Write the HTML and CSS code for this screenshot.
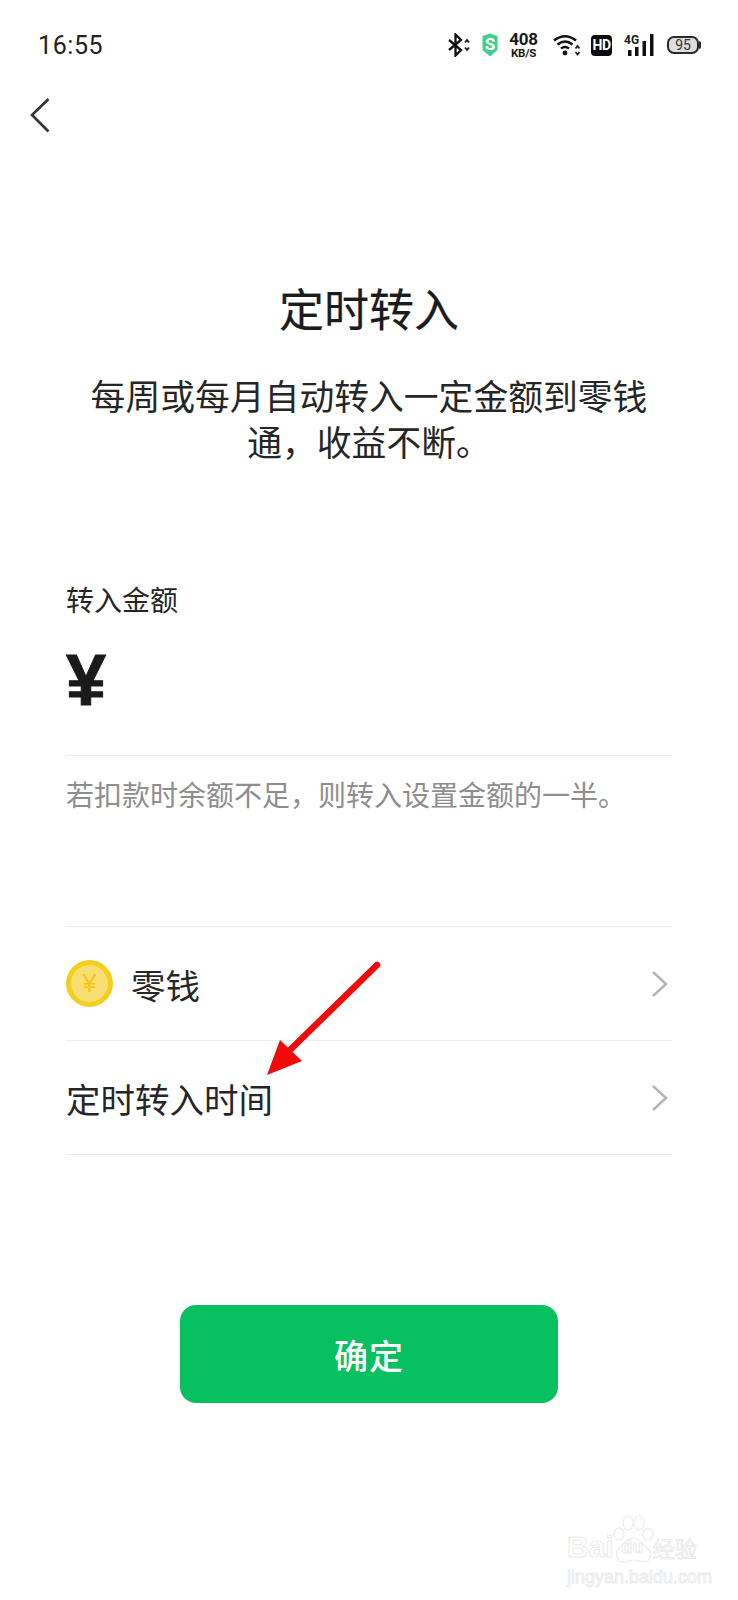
FILE: index.html
```html
<!DOCTYPE html>
<html lang="zh">
<head>
<meta charset="utf-8">
<title>定时转入</title>
<link rel="stylesheet" href="styles.css">
</head>
<body>
<div class="page">
  <header class="status">
    <span class="time">16:55</span>
    <div class="status-icons">
      <svg class="ic-bt" width="24" height="24" viewBox="0 0 24 24"><path d="M1 7 L13 17 L7.500 22.500 V1.500 L13 7 L1 17" fill="none" stroke="#111" stroke-width="2.300"/><path d="M17 9.500 L19 7 L21 9.500 M17 14.500 L19 17 L21 14.500" fill="none" stroke="#222" stroke-width="2"/></svg>
      <svg class="ic-shield" width="16" height="24" viewBox="0 0 16 24"><path d="M0.500 3 L8 0.500 L15.500 3 V17 L8 23.500 L0.500 17Z" fill="#3FCF8E"/><text x="8" y="17" class="shield-s">S</text></svg>
      <div class="speed"><span class="speed-num">408</span><span class="speed-unit">KB/S</span></div>
      <svg class="ic-wifi" width="28" height="24" viewBox="0 0 28 24"><path d="M1 7.500 Q12 -1 23 7.500 M4.500 11.500 Q12 5.500 19.500 11.500 M8 15.500 Q12 12.500 16 15.500" fill="none" stroke="#111" stroke-width="2.600"/><circle cx="12" cy="20" r="2.400" fill="#111"/><path d="M22.500 15.500 L24.500 13 L26.500 15.500 M22.500 19 L24.500 21.500 L26.500 19" fill="none" stroke="#222" stroke-width="1.800"/></svg>
      <div class="hd">HD</div>
      <svg class="ic-signal" width="30" height="24" viewBox="0 0 30 24"><text x="0" y="11" class="sig-4g">4G</text><rect x="4" y="17" width="3.500" height="6" fill="#111"/><rect x="11" y="14" width="3.500" height="9" fill="#111"/><rect x="18.500" y="8" width="3.500" height="15" fill="#111"/><rect x="26" y="1" width="3.500" height="22" fill="#111"/></svg>
      <div class="battery"><span class="batt-body">95</span><span class="batt-tip"></span></div>
    </div>
  </header>

  <nav class="nav">
    <svg width="24" height="36" viewBox="0 0 24 36"><path d="M19.500 2 L3 18 L19.500 34.500" fill="none" stroke="#333" stroke-width="2.600"/></svg>
  </nav>

  <section class="intro">
    <h1 class="title">定时转入</h1>
    <p class="desc">每周或每月自动转入一定金额到零钱通，收益不断。</p>
  </section>

  <section class="amount">
    <div class="amount-label">转入金额</div>
    <div class="amount-input">¥</div>
    <p class="hint">若扣款时余额不足，则转入设置金额的一半。</p>
  </section>

  <section class="rows">
    <div class="row">
      <div class="row-left">
        <svg class="coin" width="47" height="47" viewBox="0 0 47 47"><circle cx="23.500" cy="23.500" r="23.500" fill="#F5CF1F"/><circle cx="23.500" cy="23.500" r="18.500" fill="#F9DF73"/><text x="23.500" y="32" class="coin-y">¥</text></svg>
        <span class="row-text">零钱</span>
      </div>
      <svg class="chev" width="18" height="28" viewBox="0 0 18 28"><path d="M2 2 L15 14 L2 26" fill="none" stroke="#b4b4b4" stroke-width="2.400"/></svg>
    </div>
    <div class="row">
      <span class="row-text">定时转入时间</span>
      <svg class="chev" width="18" height="28" viewBox="0 0 18 28"><path d="M2 2 L15 14 L2 26" fill="none" stroke="#b4b4b4" stroke-width="2.400"/></svg>
    </div>
  </section>

  <div class="action"><button class="confirm">确定</button></div>

  <svg class="arrow" width="120" height="120" viewBox="0 0 120 120"><path d="M111 5 L24 90" fill="none" stroke="#F00A0A" stroke-width="6.500" stroke-linecap="round"/><path d="M1 115 L14 80 L36 101Z" fill="#F00A0A"/></svg>

  <div class="watermark">
    <div class="wm-top">
      <span class="wm-bai">Bai</span>
      <div class="wm-logo">
        <svg class="wm-paw" width="44" height="52" viewBox="0 0 44 52"><ellipse cx="7" cy="21" rx="5" ry="6" /><ellipse cx="16" cy="10" rx="5" ry="7"/><ellipse cx="27" cy="10" rx="5" ry="7"/><ellipse cx="36" cy="21" rx="5" ry="6"/><path d="M21 25 C14 25 12 31 7 35 C2 40 5 49 12 49 C17 49 18 47 22 47 C26 47 27 49 32 49 C38 49 41 41 36 36 C31 32 28 25 21 25Z"/></svg>
        <span class="wm-du">du</span>
      </div>
      <span class="wm-cn">经验</span>
    </div>
    <div class="wm-url">jingyan.baidu.com</div>
  </div>
</div>
</body>
</html>
```

FILE: styles.css
```css
* { box-sizing: border-box; }
html, body { margin: 0; padding: 0; background: #fff; }
body { font-family: "Noto Sans CJK SC", "Noto Sans", sans-serif; color: #1c1c1c; }
.page { position: relative; width: 738px; height: 1600px; overflow: hidden; background: #fff; }

.status { height: 90px; padding: 28px 37px 0 38px; display: flex; justify-content: space-between; align-items: flex-start; }
.time { font-family: Roboto, sans-serif; font-size: 25px; line-height: 36px; color: #222; letter-spacing: 0.6px; }
.status-icons { display: flex; align-items: center; height: 34px; }
.ic-bt { margin-right: 10px; }
.ic-shield { margin-right: 11px; }
.shield-s { font: 700 17px Roboto, sans-serif; fill: #fff; text-anchor: middle; }
.speed { display: flex; flex-direction: column; align-items: center; width: 29px; margin-right: 15px; font-family: Roboto, sans-serif; font-weight: 700; color: #1a1a1a; }
.speed-num { font-size: 17px; line-height: 16px; letter-spacing: -0.3px; }
.speed-unit { font-size: 11.500px; line-height: 12px; white-space: nowrap; letter-spacing: -0.2px; }
.ic-wifi { margin-right: 10px; }
.hd { width: 21px; height: 21px; margin-right: 12px; border-radius: 4px; background: #0a0a0a; color: #fff; font: 700 14px/21px Roboto, sans-serif; text-align: center; letter-spacing: -0.5px; }
.sig-4g { font: 700 12px Roboto, sans-serif; fill: #1a1a1a; }
.ic-signal { margin-right: 13px; }
.battery { display: flex; align-items: center; }
.batt-body { width: 32px; height: 18px; border: 2px solid #2a2a2a; border-radius: 7px; background: #ddd; font: 400 14px/14px Roboto, sans-serif; color: #333; text-align: center; }
.batt-tip { width: 2px; height: 8px; background: #2a2a2a; border-radius: 0 2px 2px 0; }

.nav { height: 42px; padding-left: 29px; }
.nav svg { display: block; margin-top: 7px; }

.intro { margin-top: 139px; padding: 0 80px; text-align: center; }
.title { margin: 0; font-size: 45px; font-weight: 400; line-height: 60px; color: #1c1c1c; -webkit-text-stroke: 0.2px #1c1c1c; }
.desc { margin: 34px 0 0; font-size: 34.800px; line-height: 46px; color: #262626; }

.amount { margin-top: 115px; padding: 0 66px; }
.amount-label { font-size: 28px; line-height: 40px; color: #262626; }
.amount-input { height: 120px; margin-top: 17px; font-family: "Liberation Sans", sans-serif; font-weight: 700; font-size: 72px; line-height: 88px; color: #1a1a1a; -webkit-text-stroke: 1px #1a1a1a; border-bottom: 1px solid #ececec; }
.hint { margin: 19px 0 0; font-size: 28px; line-height: 38px; color: #8e8e8e; white-space: nowrap; }

.rows { margin: 113px 66px 0; border-top: 1px solid #ececec; }
.row { height: 114px; display: flex; align-items: center; justify-content: space-between; border-bottom: 1px solid #ececec; padding-right: 3px; }
.row-left { display: flex; align-items: center; gap: 18px; }
.coin { display: block; }
.coin-y { font: 400 25px "Liberation Sans", sans-serif; fill: #F3C515; text-anchor: middle; }
.row-text { font-size: 34.500px; line-height: 46px; color: #262626; }

.action { margin-top: 150px; display: flex; justify-content: center; }
.confirm { width: 378px; height: 98px; border: 0; border-radius: 16px; background: #07C160; color: #fff; font-family: "Noto Sans CJK SC", sans-serif; font-weight: 500; font-size: 34px; letter-spacing: 1px; }

.arrow { position: absolute; left: 266px; top: 960px; }

.watermark { position: absolute; left: 567px; top: 1516px; width: 140px; color: transparent; -webkit-text-stroke: 1px #ebebeb; }
.wm-top { display: flex; align-items: flex-end; height: 46px; }
.wm-bai { font: 700 30px/30px "Liberation Sans", sans-serif; }
.wm-logo { position: relative; width: 37px; height: 30px; text-align: center; }
.wm-paw { position: absolute; left: -2px; bottom: -3px; fill: none; stroke: #ebebeb; stroke-width: 1.200; }
.wm-du { position: relative; font: 700 18px/30px "Liberation Sans", sans-serif; }
.wm-cn { font-size: 22px; line-height: 30px; margin-left: 2px; white-space: nowrap; }
.wm-url { font: 400 18px/20px "Liberation Sans", sans-serif; margin-top: 5px; white-space: nowrap; }
```
